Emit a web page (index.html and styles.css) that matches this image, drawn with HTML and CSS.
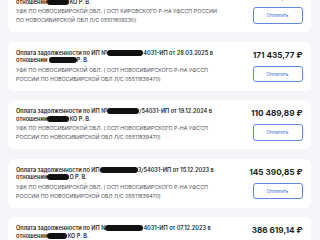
FILE: index.html
```html
<!DOCTYPE html>
<html>
<head>
<meta charset="UTF-8">
<title>Задолженности</title>
<link rel="stylesheet" href="styles.css">
</head>
<body>
<div class="list">
	<div class="card">
		<div class="info">
			<div class="title">Оплата задолженности по ИП №<span class="blot w38"></span>4031-ИП от 12.04.2025 в отношении<span class="blot w22"></span>КО Р. В.</div>
			<div class="payee">УФК ПО НОВОСИБИРСКОЙ ОБЛ. ( ОСП КИРОВСКОГО Р-НА УФССП РОССИИ ПО НОВОСИБИРСКОЙ ОБЛ Л/С 05511809230)</div>
		</div>
		<div class="pay">
			<div class="sum">98 214,06 ₽</div>
			<button class="paybtn">Оплатить</button>
		</div>
	</div>
	<div class="card">
		<div class="info">
			<div class="title">Оплата задолженности по ИП №<span class="blot w36"></span>4031-ИП от 28.03.2025 в отношении <span class="blot w28"></span>Р. В.</div>
			<div class="payee">УФК ПО НОВОСИБИРСКОЙ ОБЛ. ( ОСП НОВОСИБИРСКОГО Р-НА УФССП РОССИИ ПО НОВОСИБИРСКОЙ ОБЛ Л/С 05511839470)</div>
		</div>
		<div class="pay">
			<div class="sum">171 435,77 ₽</div>
			<button class="paybtn">Оплатить</button>
		</div>
	</div>
	<div class="card">
		<div class="info">
			<div class="title">Оплата задолженности по ИП №<span class="blot w32"></span>/54031-ИП от 19.12.2024 в отношении<span class="blot w22"></span>КО Р. В.</div>
			<div class="payee">УФК ПО НОВОСИБИРСКОЙ ОБЛ. ( ОСП НОВОСИБИРСКОГО Р-НА УФССП РОССИИ ПО НОВОСИБИРСКОЙ ОБЛ Л/С 05511839470)</div>
		</div>
		<div class="pay">
			<div class="sum">110 489,89 ₽</div>
			<button class="paybtn">Оплатить</button>
		</div>
	</div>
	<div class="card">
		<div class="info">
			<div class="title">Оплата задолженности по ИП<span class="blot w38"></span>3/54031-ИП от 15.12.2023 в отношении<span class="blot w22"></span>О Р. В.</div>
			<div class="payee">УФК ПО НОВОСИБИРСКОЙ ОБЛ. ( ОСП НОВОСИБИРСКОГО Р-НА УФССП РОССИИ ПО НОВОСИБИРСКОЙ ОБЛ Л/С 05511839470)</div>
		</div>
		<div class="pay">
			<div class="sum">145 390,85 ₽</div>
			<button class="paybtn">Оплатить</button>
		</div>
	</div>
	<div class="card">
		<div class="info">
			<div class="title">Оплата задолженности по ИП N<span class="blot w38"></span>4031-ИП от 07.12.2023 в отношении<span class="blot w20"></span>КО Р. В.</div>
			<div class="payee">УФК ПО НОВОСИБИРСКОЙ ОБЛ. ( ОСП НОВОСИБИРСКОГО Р-НА УФССП РОССИИ ПО НОВОСИБИРСКОЙ ОБЛ Л/С 05511839470)</div>
		</div>
		<div class="pay">
			<div class="sum">386 619,14 ₽</div>
			<button class="paybtn">Оплатить</button>
		</div>
	</div>
</div>
</body>
</html>
```
FILE: styles.css
```css
body{
	margin: 0;
	background-color: #f3f5f8;
	font-family: Inter, "Noto Sans", sans-serif;
	color: #1e1f24;
	overflow: hidden;
}
.list{
	display: flex;
	flex-direction: column;
	gap: 9.5px;
	margin: -17px 9px 0 7.5px;
}
.card{
	display: flex;
	justify-content: space-between;
	background-color: #ffffff;
	border-radius: 6px;
	padding: 8px 8.5px 7px 8.5px;
}
.info{
	width: 206px;
}
.title{
	font-size: 5.6px;
	font-weight: 600;
	line-height: 7.5px;
	margin-bottom: 1px;
	padding-right: 6px;
}
.payee{
	font-size: 5.3px;
	line-height: 9px;
	color: #50525a;
}
.blot{
	display: inline-block;
	height: 6px;
	border-radius: 3px;
	background-color: #111111;
	vertical-align: -1px;
}
.w38{ width: 38px; }
.w36{ width: 36px; }
.w32{ width: 32px; }
.w28{ width: 28px; }
.w22{ width: 22px; }
.w20{ width: 20px; }
.pay{
	width: 50px;
	display: flex;
	flex-direction: column;
	align-items: flex-end;
}
.sum{
	font-size: 8.2px;
	font-weight: 700;
	line-height: 10px;
	white-space: nowrap;
	margin-bottom: 6px;
}
.paybtn{
	width: 50px;
	height: 16.5px;
	background: #ffffff;
	border: 1px solid #5f88dd;
	border-radius: 3px;
	color: #3f6fd1;
	font-family: Inter, "Noto Sans", sans-serif;
	font-size: 4.8px;
	padding: 0;
}
```
